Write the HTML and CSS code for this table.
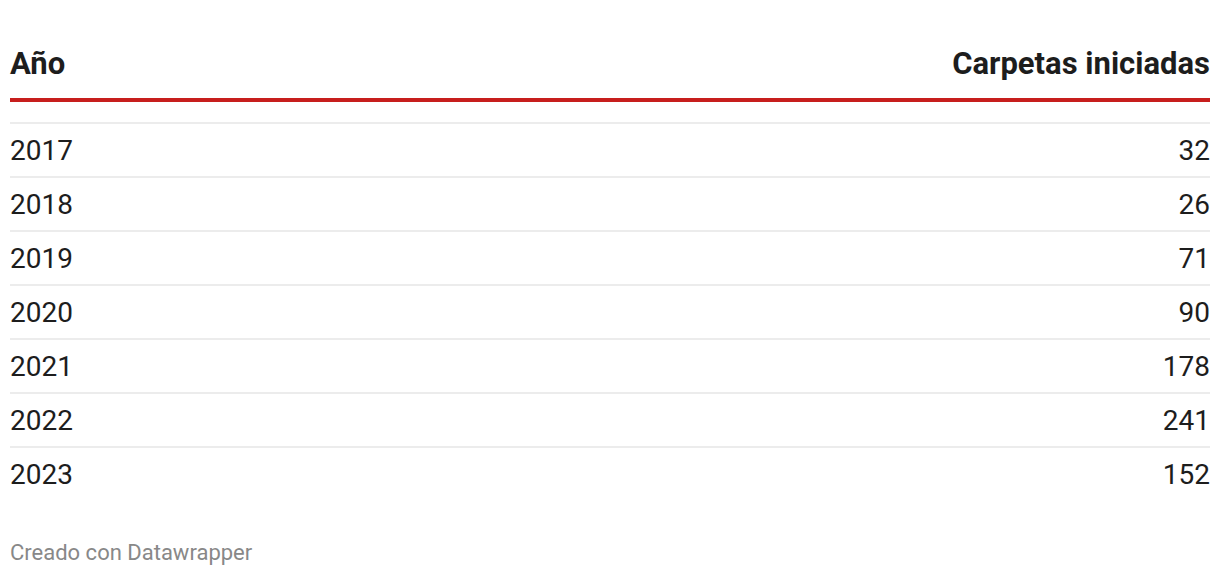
FILE: index.html
```html
<!DOCTYPE html>
<html lang="es">
<head>
<meta charset="utf-8">
<title>Carpetas iniciadas</title>
<link rel="stylesheet" href="styles.css">
</head>
<body>
<div class="chart">
  <div class="head-row">
    <span class="col-year">Año</span>
    <span class="col-num">Carpetas iniciadas</span>
  </div>
  <div class="rows">
    <div class="row"><span>2017</span><span>32</span></div>
    <div class="row"><span>2018</span><span>26</span></div>
    <div class="row"><span>2019</span><span>71</span></div>
    <div class="row"><span>2020</span><span>90</span></div>
    <div class="row"><span>2021</span><span>178</span></div>
    <div class="row"><span>2022</span><span>241</span></div>
    <div class="row"><span>2023</span><span>152</span></div>
  </div>
  <div class="footer">Creado con Datawrapper</div>
</div>
</body>
</html>
```

FILE: styles.css
```css
html, body {
  margin: 0;
  padding: 0;
  background: #ffffff;
}
body {
  font-family: Roboto, "Liberation Sans", sans-serif;
  color: #1d1d1d;
}
.chart {
  padding: 47px 10px 0 10px;
}
.head-row {
  display: flex;
  justify-content: space-between;
  font-size: 31px;
  font-weight: 700;
  line-height: 34px;
  padding-bottom: 17px;
  border-bottom: 4px solid #c71e1d;
}
.rows {
  margin-top: 20px;
}
.row {
  display: flex;
  justify-content: space-between;
  font-size: 28px;
  line-height: 50px;
  padding-top: 2px;
  border-top: 2px solid #ececec;
}
.footer {
  margin-top: 40px;
  font-size: 22px;
  line-height: 26px;
  color: #888888;
}
```
